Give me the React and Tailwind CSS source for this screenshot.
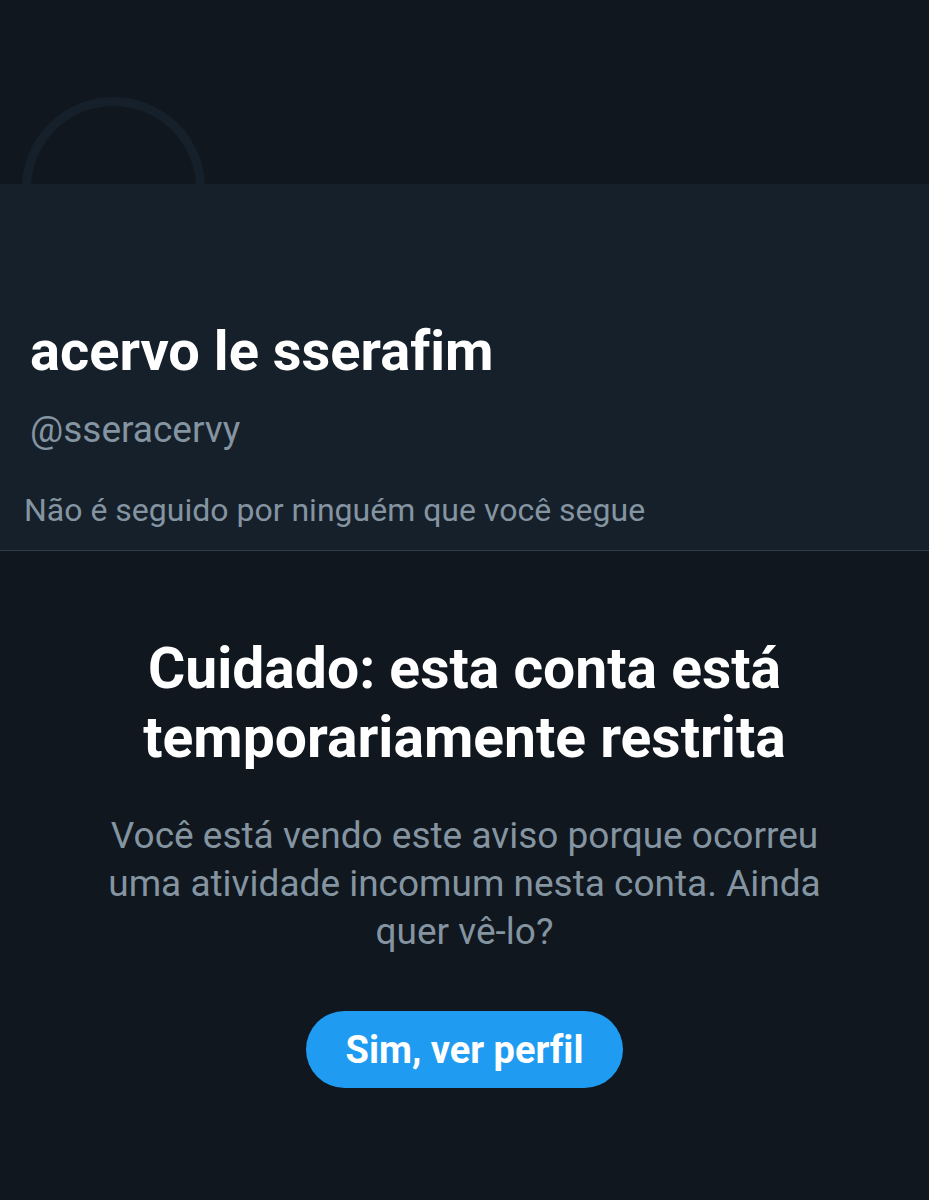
import React from 'react';

const profile = {
    name: 'acervo le sserafim',
    handle: '@sseracervy',
    followers: 'Não é seguido por ninguém que você segue',
};

function ProfileHeader({ name, handle, followers }) {
    return (
        <header className="border-b border-[#2f3b45] bg-[#16202a]">
            {/* Banner, with the top half of the avatar ring */}
            <div className="h-[184px] overflow-hidden bg-[#10171e] px-[22px] pt-[97px]">
                <div className="size-[183px] rounded-full border-9 border-[#16202b]"></div>
            </div>

            <div className="px-[30px] pt-[131px]">
                <h1 className="text-[56px] leading-[72px] font-bold text-white">{name}</h1>
                <p className="mt-[19px] text-[37px] leading-[48px] text-[#8494a1]">{handle}</p>
            </div>
            <p className="mt-8 px-6 pb-4 text-[32px] leading-[48px] text-[#8494a1]">{followers}</p>
        </header>
    );
}

function RestrictedNotice() {
    return (
        <main className="flex flex-col items-center px-20 pt-[83px] pb-28 text-center">
            <h2 className="text-[57px] leading-[69px] font-bold text-white">
                Cuidado: esta conta está<br />temporariamente restrita
            </h2>
            <p className="mt-10 text-[37px] leading-[48px] text-[#8494a1]">
                Você está vendo este aviso porque ocorreu<br />uma atividade incomum nesta conta. Ainda<br />quer vê-lo?
            </p>
            <button
                type="button"
                className="mt-[55px] h-[77px] rounded-full bg-[#1f9bf1] px-10 text-[38px] leading-[48px] font-bold text-white"
            >
                Sim, ver perfil
            </button>
        </main>
    );
}

export default function App() {
    return (
        <div className="min-h-screen bg-[#10171e] font-['Roboto',sans-serif] antialiased [font-variant-ligatures:none]">
            <ProfileHeader {...profile} />
            <RestrictedNotice />
        </div>
    );
}
